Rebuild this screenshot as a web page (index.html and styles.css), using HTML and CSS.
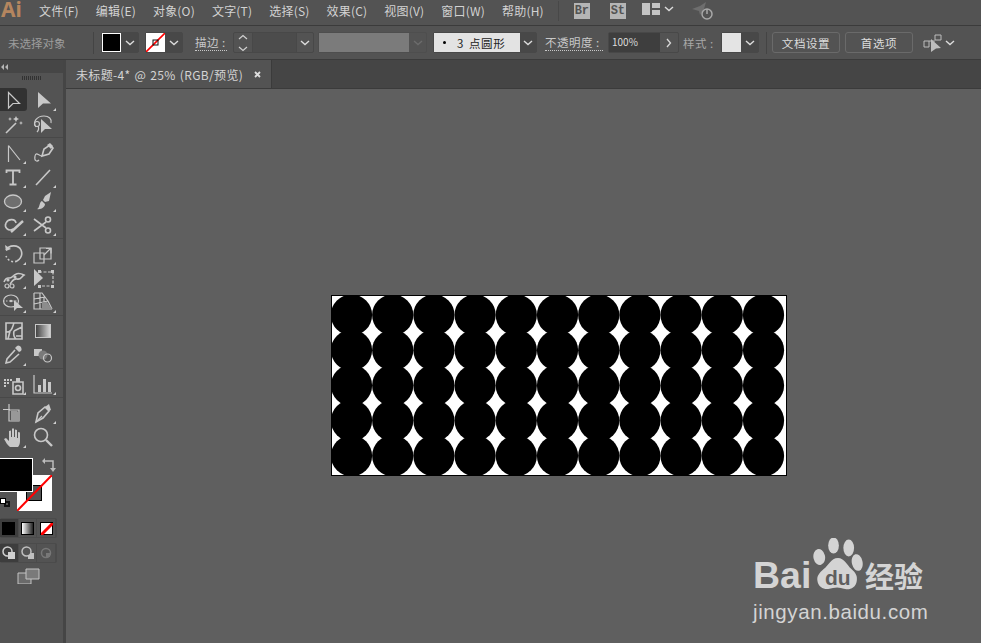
FILE: index.html
```html
<!DOCTYPE html>
<html lang="en">
<head>
    <meta charset="UTF-8">
    <title>Ai</title>
    <link rel="stylesheet" href="styles.css">
</head>
<body>
    <div class="menubar">
        <span class="logo">Ai</span>
        <ul class="menu">
            <li>文件(F)</li>
            <li>编辑(E)</li>
            <li>对象(O)</li>
            <li>文字(T)</li>
            <li>选择(S)</li>
            <li>效果(C)</li>
            <li>视图(V)</li>
            <li>窗口(W)</li>
            <li>帮助(H)</li>
        </ul>
        <div class="menu-sep"></div>
        <span class="bridge">Br</span>
        <span class="bridge stock">St</span>
        <svg class="layout-ic" width="18" height="14" viewBox="0 0 18 14"><path d="M0 1h8v12H0zM10 1h8v5h-8zM10 8h8v5h-8z" fill="#c4c4c4"/></svg>
        <svg class="chev menu-chev" width="10" height="6" viewBox="0 0 10 6"><path d="M1 1l4 3.5L9 1"/></svg>
        <svg class="rocket" width="24" height="20" viewBox="0 0 24 20"><path d="M1 8L9 5 15 1 13 8 9 14 8 10z" fill="#6e6e6e"/><circle cx="16" cy="13" r="5" fill="none" stroke="#a8a8a8" stroke-width="1.5"/><path d="M16 8v5" stroke="#a8a8a8" stroke-width="1.5"/></svg>
    </div>

    <div class="optbar">
        <span class="no-sel">未选择对象</span>
        <div class="opt-sep"></div>
        <div class="combo fill-combo">
            <span class="swatch black"></span>
            <span class="drop"><svg class="chev" width="10" height="6" viewBox="0 0 10 6"><path d="M1 1l4 3.5L9 1"/></svg></span>
        </div>
        <div class="combo stroke-combo">
            <span class="swatch">
                <svg width="19" height="19" viewBox="0 0 19 19"><path d="M0 19L19 0" stroke="#f00" stroke-width="1.6"/><rect x="7" y="7" width="5" height="5" fill="none" stroke="#111"/></svg>
            </span>
            <span class="drop"><svg class="chev" width="10" height="6" viewBox="0 0 10 6"><path d="M1 1l4 3.5L9 1"/></svg></span>
        </div>
        <span class="lbl stroke-lbl">描边 :</span>
        <div class="combo weight">
            <span class="spin">
                <svg width="10" height="18" viewBox="0 0 10 18"><path d="M1 5l4-3.5L9 5M1 13l4 3.5L9 13" fill="none" stroke="#d0d0d0" stroke-width="1.2"/></svg>
            </span>
            <span class="field"></span>
            <span class="drop"><svg class="chev" width="10" height="6" viewBox="0 0 10 6"><path d="M1 1l4 3.5L9 1"/></svg></span>
        </div>
        <div class="combo profile">
            <span class="gray-field"></span>
            <span class="drop"><svg class="chev off" width="10" height="6" viewBox="0 0 10 6"><path d="M1 1l4 3.5L9 1"/></svg></span>
        </div>
        <div class="combo brush">
            <span class="brush-val"><i class="dot"></i><b>3</b>点圆形</span>
            <span class="drop"><svg class="chev" width="10" height="6" viewBox="0 0 10 6"><path d="M1 1l4 3.5L9 1"/></svg></span>
        </div>
        <span class="lbl opacity-lbl">不透明度 :</span>
        <div class="combo opacity">
            <span class="op-val">100%</span>
            <span class="drop"><svg width="6" height="10" viewBox="0 0 6 10"><path d="M1 1l3.5 4L1 9" fill="none" stroke="#d8d8d8" stroke-width="1.3"/></svg></span>
        </div>
        <span class="lbl style-lbl">样式 :</span>
        <div class="combo style">
            <span class="swatch light"></span>
            <span class="drop"><svg class="chev" width="10" height="6" viewBox="0 0 10 6"><path d="M1 1l4 3.5L9 1"/></svg></span>
        </div>
        <div class="opt-sep sep2"></div>
        <button class="btn">文档设置</button>
        <button class="btn">首选项</button>
        <svg class="arrange" width="20" height="18" viewBox="0 0 20 18"><path d="M1 7h5v6H1zM12 1h6v5h-6zM6 7h6" fill="none" stroke="#bdbdbd"/><path d="M8 5l10 9-5 .5L8 18z" fill="#bdbdbd"/></svg>
        <svg class="chev" width="10" height="6" viewBox="0 0 10 6"><path d="M1 1l4 3.5L9 1"/></svg>
    </div>

    <div class="workspace">
        <aside class="tools">
            <div class="tools-head">
                <svg width="7" height="6" viewBox="0 0 7 6"><path d="M3 0v6L0 3zM7 0v6L4 3z" fill="#b5b5b5"/></svg>
            </div>
            <div class="grip"></div>

            <div class="tool-group">
                <div class="tool active"><svg viewBox="0 0 24 24"><path class="ln" d="M6.5 4.5V20l4.5-4.5h6.500z"/></svg></div>
                <div class="tool more"><svg viewBox="0 0 24 24"><path class="fl" d="M7 4v16l5-4.500h8z"/></svg></div>
                <div class="tool"><svg viewBox="0 0 24 24"><path class="ln th" d="M4 21L14 11"/><path class="fl" d="M14 4l1 2 2 1-2 1-1 2-1-2-2-1 2-1zM8 5l.6 1.400L10 7l-1.400.6L8 9l-.6-1.400L6 7l1.400-.6zM19 9l.6 1.400 1.400.6-1.400.6L19 13l-.6-1.400-1.400-.6 1.400-.6z"/></svg></div>
                <div class="tool"><svg viewBox="0 0 24 24"><path class="ln" d="M5 15C1 10 6 4 13 4c5 0 8 3 7 7"/><circle class="ln" cx="6" cy="12" r="2.500"/><path class="ln" d="M7 14c1 2 1 4-1 6"/><path class="fl" d="M10 7v14l4-4h7z"/></svg></div>
            </div>

            <div class="tool-group">
                <div class="tool more"><svg viewBox="0 0 24 24"><path class="ln" d="M6.500 4.500V21M6.500 4.500L18 19"/></svg></div>
                <div class="tool"><svg viewBox="0 0 24 24"><path class="ln th" d="M11 15l2-7 6-4 3 3-4 6-7 2z"/><path class="ln" d="M11 15C8 15 5 10 4 15s2 6 4 4"/><path class="fl" d="M16 4l3-2 3 3-2 3z"/></svg></div>
                <div class="tool more"><svg viewBox="0 0 24 24"><path class="ln t-bar" d="M4.500 8V5.500h13V8M11 5.500V19M7.500 19.500h7"/></svg></div>
                <div class="tool more"><svg viewBox="0 0 24 24"><path class="ln th" d="M5 20L19 5"/></svg></div>
                <div class="tool more"><svg viewBox="0 0 24 24"><ellipse cx="11" cy="12.500" rx="8.500" ry="6.500" fill="#6f6f6f" stroke="#c8c8c8" stroke-width="1.300"/></svg></div>
                <div class="tool more"><svg viewBox="0 0 24 24"><path class="fl" d="M20 3l-2 9-4 1-2-2 2-4zM11 12l3 3c0 3-4 6-8 5 3-1 2-7 5-8z"/></svg></div>
                <div class="tool more"><svg viewBox="0 0 24 24"><path class="ln th" d="M11 16c-5 3-9-2-7-6s9-5 10 0"/><path class="ln thick" d="M9 19L21 8"/></svg></div>
                <div class="tool more"><svg viewBox="0 0 24 24"><circle class="ln th" cx="17" cy="6.500" r="2.500"/><circle class="ln th" cx="17" cy="17.500" r="2.500"/><path class="ln th" d="M3 6l12 9M3 18L15 9"/></svg></div>
            </div>

            <div class="tool-group">
                <div class="tool more"><svg viewBox="0 0 24 24"><path class="ln th" d="M4 8c3-5 12-6 15 0 2 5-1 9-4 11"/><path class="ln th" stroke-dasharray="2 2" d="M15 19c-4 2-9 0-11-5"/><path class="fl" d="M3 3l1 6 5-2z"/></svg></div>
                <div class="tool more"><svg viewBox="0 0 24 24"><path class="ln" d="M3 11h10v10H3zM9 6h11v11H9z"/><path class="ln" d="M13 13l6-6M15 6.500h5v5"/></svg></div>
                <div class="tool more"><svg viewBox="0 0 24 24"><path class="ln th" d="M2 16c3-7 5-2 8-5s6-5 12-2c-3 2-3 5-7 4s-5 3-7 5"/><circle class="fl" cx="6" cy="14" r="1.600"/><circle class="fl" cx="13" cy="11" r="1.600"/><circle class="ln" cx="5" cy="20" r="2"/><circle class="ln" cx="10" cy="20" r="2"/></svg></div>
                <div class="tool"><svg viewBox="0 0 24 24"><path class="fl" d="M3 3l9 9-9 8z"/><path class="ln" stroke-dasharray="3 1.500" d="M8 6h14v14H8"/><path class="fl" d="M7 4h3v3H7zM20 4h3v3h-3zM20 19h3v3h-3zM7 19h3v3H7z"/></svg></div>
                <div class="tool more"><svg viewBox="0 0 24 24"><ellipse class="ln" cx="9" cy="11" rx="7.500" ry="6"/><path class="ln" stroke-dasharray="1.500 1.500" d="M1 11h14"/><circle class="fl" cx="9" cy="11" r="1.200"/><path class="fl" d="M12 10v11l3-3h6z"/></svg></div>
                <div class="tool more"><svg viewBox="0 0 24 24"><path class="ln" d="M3 3v16h18M3 3l8 0 3 4 3 4 4 8M3 9l11-2M3 14l14-3M9 3v16M13 7v12"/><path d="M11 12l5 0 5 7H11z" fill="#8c8c8c"/></svg></div>
            </div>

            <div class="tool-group">
                <div class="tool"><svg viewBox="0 0 24 24"><path class="ln th" d="M4 4h16v16H4zM4 13c6 0 6-4 8-9M12 12l8-4M12 12c-1 4 0 6 2 8M8 12l-2 8M14 17l6 0"/></svg></div>
                <div class="tool"><svg viewBox="0 0 24 24"><defs><linearGradient id="grad"><stop offset="0" stop-color="#3e3e3e"/><stop offset="1" stop-color="#d8d8d8"/></linearGradient></defs><rect x="4.500" y="5.500" width="15" height="13" fill="url(#grad)" stroke="#c8c8c8"/></svg></div>
                <div class="tool more"><svg viewBox="0 0 24 24"><path class="fl" d="M15 3c2-2 6 2 4 5l-2 1-4-4z"/><path class="ln th" d="M13 7L5 16l-1 4 4-1 9-8"/></svg></div>
                <div class="tool"><svg viewBox="0 0 24 24"><path d="M3 6h8v7H3z" fill="#c8c8c8"/><circle cx="12" cy="12" r="4.500" fill="#7a7a7a"/><circle class="ln" cx="16.500" cy="15" r="4"/></svg></div>
            </div>

            <div class="tool-group">
                <div class="tool more"><svg viewBox="0 0 24 24"><path class="fl" d="M2 7h2v2H2zM5 7h2v2H5zM8 7h2v2H8zM2 10h2v2H2zM5 10h2v2H5zM2 13h2v2H2z"/><path class="ln th" d="M11 10h10v12H11z"/><path class="fl" d="M14 6h4v4h-4z"/><circle class="ln th" cx="16" cy="16" r="2.500"/></svg></div>
                <div class="tool more"><svg viewBox="0 0 24 24"><path class="ln" d="M3 3v18h18"/><path class="fl" d="M7 13h3v7H7zM12 7h3v13h-3zM17 10h3v10h-3z"/></svg></div>
            </div>

            <div class="tool-group last">
                <div class="tool"><svg viewBox="0 0 24 24"><path class="ln" d="M1 8.500h7M7 3v5M7 9h10v11H7z" /><path d="M9 10h6l3 3v7H9z" fill="#989898"/></svg></div>
                <div class="tool more"><svg viewBox="0 0 24 24"><path class="ln th" d="M5 21l2-9 7-6 4 4-6 7z"/><path class="fl" d="M14 6l4-3 2 6-2 1z"/><path class="ln" d="M5 21l6-6"/></svg></div>
                <div class="tool more"><svg viewBox="0 0 24 24"><path class="fl" d="M8 22c-3-2-4-5-6-8l2-1 3 3V6l2-.5V12h1V3.500l2 0V12h1V4.500l2 .5v8h1V7l2 .5V16c0 3-1 5-2 6z"/></svg></div>
                <div class="tool"><svg viewBox="0 0 24 24"><circle class="ln th" cx="10" cy="10" r="6.500"/><path class="ln thick" d="M15 15l6 6"/></svg></div>
            </div>

            <div class="swatches">
                <div class="big-fill"></div>
                <div class="big-stroke">
                    <div class="hole"></div>
                    <svg width="35" height="36" viewBox="0 0 35 36"><path d="M0 36L35 0" stroke="#f00" stroke-width="2"/></svg>
                </div>
                <svg class="swap" width="14" height="14" viewBox="0 0 14 14"><path d="M2 3h9v8" fill="none" stroke="#bdbdbd" stroke-width="1.500"/><path d="M3 0v6L0 3zM8 10h6l-3 4z" fill="#bdbdbd"/></svg>
                <div class="mini-stroke"></div>
                <div class="mini-fill"></div>
            </div>

            <div class="mode-row">
                <span class="mode on"><i class="m-solid"></i></span>
                <span class="mode"><i class="m-grad"></i></span>
                <span class="mode"><i class="m-none"><svg width="12" height="12" viewBox="0 0 12 12"><path d="M0 12L12 0" stroke="#f00" stroke-width="3"/></svg></i></span>
            </div>
            <div class="mode-row draw">
                <span class="mode on"><svg width="14" height="14" viewBox="0 0 14 14"><circle cx="5.500" cy="5.500" r="4.500" fill="none" stroke="#d0d0d0" stroke-width="1.500"/><path d="M6 6h7v7H6z" fill="#d0d0d0"/></svg></span>
                <span class="mode"><svg width="14" height="14" viewBox="0 0 14 14"><circle cx="5.500" cy="5.500" r="4.500" fill="none" stroke="#c0c0c0" stroke-width="1.500"/><path d="M7 9h6v4H7zM9 7h4v2H9z" fill="#c0c0c0"/></svg></span>
                <span class="mode"><svg width="14" height="14" viewBox="0 0 14 14"><circle cx="7" cy="7" r="4.500" fill="none" stroke="#777" stroke-width="1.500"/><path d="M7 7h4v4H7z" fill="#777"/></svg></span>
            </div>
            <div class="screen-mode">
                <svg width="24" height="16" viewBox="0 0 24 16"><path d="M1 5h13v11H1z" fill="#6a6a6a" stroke="#c4c4c4"/><path d="M9 1h13v10H9z" fill="#7a7a7a" stroke="#c4c4c4"/></svg>
            </div>
        </aside>

        <div class="docarea">
            <div class="tabs">
                <div class="tab">
                    <span>未标题-4* @ 25% (RGB/预览)</span>
                    <svg width="7" height="7" viewBox="0 0 7 7"><path d="M1 1l5 5M6 1L1 6" stroke="#dedede" stroke-width="1.800"/></svg>
                </div>
            </div>
            <div class="canvas">
                <svg class="artboard" width="456" height="181" viewBox="0 0 456 181">
                    <defs>
                        <g id="row">
                            <circle cx="20.5" cy="0" r="20.6"/>
                            <circle cx="61.7" cy="0" r="20.6"/>
                            <circle cx="102.9" cy="0" r="20.6"/>
                            <circle cx="144.1" cy="0" r="20.6"/>
                            <circle cx="185.3" cy="0" r="20.6"/>
                            <circle cx="226.5" cy="0" r="20.6"/>
                            <circle cx="267.7" cy="0" r="20.6"/>
                            <circle cx="308.9" cy="0" r="20.6"/>
                            <circle cx="350.1" cy="0" r="20.6"/>
                            <circle cx="391.3" cy="0" r="20.6"/>
                            <circle cx="432.5" cy="0" r="20.6"/>
                        </g>
                    </defs>
                    <rect width="456" height="181" fill="#fff"/>
                    <use href="#row" y="20"/>
                    <use href="#row" y="55.2"/>
                    <use href="#row" y="90.4"/>
                    <use href="#row" y="125.6"/>
                    <use href="#row" y="160.8"/>
                    <rect x=".5" y=".5" width="455" height="180" fill="none" stroke="#000"/>
                </svg>
                <div class="watermark">
                    <div class="wm-top">
                        <span class="wm-bai">Bai</span>
                        <svg class="paw" width="50" height="56" viewBox="0 0 56 56" preserveAspectRatio="none">
                            <ellipse cx="23" cy="7.500" rx="6" ry="8"/>
                            <ellipse cx="40" cy="10" rx="6" ry="8.500"/>
                            <ellipse cx="7" cy="19" rx="6.500" ry="8" transform="rotate(-15 7 19)"/>
                            <ellipse cx="49.500" cy="24.500" rx="6" ry="8.500" transform="rotate(-15 49.500 24.500)"/>
                            <path d="M28 20c7 0 10 7 15 11 5 4 7 7 6 12-1 7-8 9-13 8-4-.7-6-1.500-9-1.500s-6 1-10 1.500c-5 .6-11-2-12-8-1-5 2-8 7-12 5-3 8-11 16-11z"/>
                        </svg>
                        <span class="wm-du">du</span>
                        <span class="wm-jy">经验</span>
                    </div>
                    <div class="wm-url">jingyan.baidu.com</div>
                </div>
            </div>
        </div>
    </div>
</body>
</html>
```

FILE: styles.css
```css
*{
    margin: 0;
    padding: 0;
    box-sizing: border-box;
}
body{
    width: 981px;
    height: 643px;
    overflow: hidden;
    background-color: #535353;
    color: #d2d2d2;
    font-family: "Noto Sans CJK SC", "Liberation Sans", sans-serif;
    font-size: 12px;
    display: flex;
    flex-direction: column;
}

/* menu */
.menubar{
    height: 26px;
    display: flex;
    align-items: center;
    border-bottom: 1px solid #3b3b3b;
}
.logo{
    width: 39px;
    padding-left: 1px;
    align-self: flex-start;
    font-family: "Noto Sans", sans-serif;
    font-size: 21px;
    font-weight: 700;
    color: #b5865f;
    line-height: 18px;
}
.menu{
    list-style-type: none;
    display: flex;
    gap: 17px;
}
.menu li{
    white-space: nowrap;
    margin-top: -5px;
    letter-spacing: .2px;
}
.menu-sep{
    width: 1px;
    height: 20px;
    margin-left: 14px;
    margin-top: -4px;
    background-color: #484848;
}
.bridge{
    width: 16px;
    height: 16px;
    margin-left: 15px;
    margin-top: -4px;
    background-color: #b5b5b5;
    color: #535353;
    font-family: "Liberation Mono", monospace;
    font-size: 12px;
    font-weight: 700;
    line-height: 16px;
    text-align: center;
}
.stock{
    margin-left: 20px;
}
.layout-ic{
    margin-left: 16px;
    margin-top: -7px;
}
.menu-chev{
    margin-left: 4px;
    margin-top: -8px;
}
.rocket{
    margin-left: 17px;
    margin-top: -3px;
}
.chev{
    flex: none;
    fill: none;
    stroke: #dcdcdc;
    stroke-width: 1.4;
}
.chev.off{
    stroke: #6c6c6c;
}

/* options */
.optbar{
    height: 34px;
    display: flex;
    align-items: center;
    border-bottom: 1px solid #3b3b3b;
}
.no-sel{
    width: 93px;
    padding-left: 8px;
    color: #9c9c9c;
    font-size: 11.500px;
    white-space: nowrap;
}
.opt-sep{
    width: 1px;
    height: 22px;
    background-color: #444;
}
.sep2{
    margin-left: 7px;
}
.combo{
    display: flex;
    height: 21px;
    border: 1px solid #484848;
    border-radius: 2px;
    align-items: stretch;
}
.fill-combo{
    margin-left: 7px;
    width: 38px;
}
.stroke-combo{
    margin-left: 6px;
    width: 38px;
}
.swatch{
    width: 19px;
    background-color: #fff;
    flex: none;
}
.swatch svg{
    display: block;
}
.black{
    background-color: #000;
    border: 1px solid #fff;
}
.light{
    background-color: #e4e4e4;
}
.drop{
    flex: 1;
    display: flex;
    align-items: center;
    justify-content: center;
    background-color: #484848;
}
.lbl{
    color: #c8c8c8;
    font-size: 11.5px;
    letter-spacing: .5px;
    white-space: nowrap;
    border-bottom: 1px dotted #c8c8c8;
    line-height: 16px;
}
.stroke-lbl{
    margin-left: 12px;
    width: 32px;
}
.weight{
    margin-left: 6px;
    width: 81px;
}
.spin{
    width: 19px;
    display: flex;
    align-items: center;
    justify-content: center;
    border-right: 1px solid #484848;
}
.field{
    flex: 1;
    background-color: #4c4c4c;
}
.weight .drop{
    flex: none;
    width: 17px;
    background: none;
    border-left: 1px solid #484848;
}
.profile{
    margin-left: 4px;
    width: 109px;
    border-color: #4e4e4e;
}
.gray-field{
    width: 90px;
    background-color: #7b7b7b;
}
.profile .drop{
    background: none;
}
.brush{
    margin-left: 6px;
    width: 104px;
}
.brush-val{
    width: 86px;
    display: flex;
    align-items: center;
    padding-left: 9px;
    background-color: #e3e3e3;
    color: #222;
    font-size: 11.5px;
    letter-spacing: .6px;
}
.brush-val b{
    font-weight: 400;
    margin: 0 5px 0 11px;
}
.dot{
    width: 3px;
    height: 3px;
    border-radius: 50%;
    background-color: #000;
}
.opacity-lbl{
    margin-left: 8px;
    width: 58px;
}
.opacity{
    margin-left: 5px;
    width: 71px;
}
.op-val{
    width: 51px;
    padding-left: 3px;
    background-color: #3e3e3e;
    color: #dcdcdc;
    font-size: 10px;
    line-height: 17px;
}
.opacity .drop{
    background: none;
}
.style-lbl{
    margin-left: 4px;
    width: 34px;
    border: none;
    color: #a8a8a8;
}
.style{
    margin-left: 4px;
    width: 38px;
}
.btn{
    width: 68px;
    height: 21px;
    margin-left: 5px;
    border: 1px solid #6a6a6a;
    border-radius: 3px;
    background: none;
    color: #dcdcdc;
    font-family: inherit;
    font-size: 11.5px;
    letter-spacing: .6px;
}
.btn + .btn{
    margin-left: 5px;
}
.arrange{
    margin-left: 10px;
    margin-right: 2px;
}

/* tools */
.workspace{
    flex: 1;
    display: flex;
    min-height: 0;
}
.tools{
    width: 66px;
    flex: none;
    background-color: #535353;
    border-right: 3px solid #454545;
}
.tools-head{
    height: 13px;
    background-color: #464646;
    display: flex;
    align-items: center;
    padding-left: 1px;
}
.grip{
    height: 12px;
    margin: 0 auto;
    width: 20px;
    background: repeating-linear-gradient(90deg, #323232 0 1px, transparent 1px 2px) 0 3px / 100% 4px no-repeat;
}
.tool-group{
    display: grid;
    grid-template-columns: 28px 30px;
    grid-auto-rows: 24px;
    padding: 3px 0 1px;
    border-bottom: 1px solid #484848;
}
.tool-group.last{
    border-bottom: none;
}
.tool{
    position: relative;
    display: flex;
    align-items: center;
    justify-content: center;
}
.tool svg{
    width: 24px;
    height: 24px;
}
.tool.active{
    background-color: #323232;
    border-radius: 0 3px 3px 0;
    height: 23px;
    width: 27px;
}
.tool.more::after{
    content: "";
    position: absolute;
    right: 2px;
    bottom: 1px;
    border-style: solid;
    border-width: 0 0 3px 3px;
    border-color: transparent transparent #d0d0d0 transparent;
}
.ln{
    fill: none;
    stroke: #c8c8c8;
    stroke-width: 1.2;
}
.th{
    stroke-width: 1.6;
}
.thick{
    stroke-width: 2.4;
}
.t-bar{
    stroke-width: 1.8;
}
.fl{
    fill: #c8c8c8;
}

/* colour */
.swatches{
    position: relative;
    height: 63px;
}
.big-fill{
    position: absolute;
    left: -1px;
    top: 8px;
    width: 34px;
    height: 34px;
    background-color: #000;
    border: 1px solid #fff;
    z-index: 2;
}
.big-stroke{
    position: absolute;
    left: 17px;
    top: 25px;
    width: 35px;
    height: 36px;
    background-color: #fff;
}
.big-stroke svg{
    position: absolute;
    left: 0;
    top: 0;
}
.hole{
    position: absolute;
    left: 9px;
    top: 10px;
    width: 16px;
    height: 16px;
    background-color: #535353;
    border: 1px solid #000;
}
.swap{
    position: absolute;
    left: 42px;
    top: 8px;
}
.mini-stroke{
    position: absolute;
    left: 4px;
    top: 51px;
    width: 6px;
    height: 6px;
    border: 2px solid #111;
}
.mini-fill{
    position: absolute;
    left: 0;
    top: 48px;
    width: 6px;
    height: 6px;
    background-color: #fff;
    border: 1px solid #000;
}
.mode-row{
    display: flex;
    height: 20px;
    width: 57px;
    margin-top: 5px;
    border: 1px solid #4b4b4b;
    border-left: none;
    border-radius: 2px;
}
.mode-row.draw{
    margin-top: 5px;
}
.mode{
    flex: 1;
    display: flex;
    align-items: center;
    justify-content: center;
    border-right: 1px solid #4b4b4b;
}
.mode.on{
    background-color: #3d3d3d;
}
.mode i{
    display: block;
    width: 13px;
    height: 13px;
    border: 1px solid #000;
}
.m-solid{
    background-color: #000;
}
.m-grad{
    background: linear-gradient(90deg, #fff, #222);
}
.m-none{
    background-color: #fff;
}
.m-none svg{
    display: block;
}
.screen-mode{
    margin-top: 5px;
    padding-left: 17px;
}
.screen-mode svg{
    display: block;
}

/* document */
.docarea{
    flex: 1;
    display: flex;
    flex-direction: column;
    min-width: 0;
}
.tabs{
    height: 29px;
    background-color: #454545;
    border-bottom: 1px solid #3b3b3b;
}
.tab{
    width: 206px;
    height: 28px;
    background-color: #535353;
    border-right: 1px solid #3b3b3b;
    display: flex;
    align-items: center;
    gap: 11px;
    padding-left: 10px;
    color: #d4d4d4;
    font-size: 12px;
    letter-spacing: .35px;
    word-spacing: 1px;
    white-space: nowrap;
}
.canvas{
    flex: 1;
    position: relative;
    background-color: #5f5f5f;
    padding: 206px 0 0 265px;
}
.artboard{
    display: block;
}

/* watermark */
.watermark{
    position: absolute;
    left: 687px;
    top: 449px;
    width: 180px;
    color: #d4d4d4;
}
.wm-top{
    position: relative;
    height: 62px;
}
.wm-bai{
    position: absolute;
    left: 0;
    top: 14px;
    font-family: "Liberation Sans", sans-serif;
    font-size: 37.5px;
    font-weight: 700;
    line-height: 46px;
}
.paw{
    position: absolute;
    left: 60px;
    top: 0;
    fill: #d4d4d4;
}
.wm-du{
    position: absolute;
    left: 72px;
    top: 27px;
    font-family: "Liberation Sans", sans-serif;
    font-size: 21px;
    font-weight: 700;
    line-height: 26px;
    color: #5f5f5f;
}
.wm-jy{
    position: absolute;
    left: 112px;
    top: 16px;
    font-size: 29px;
    font-weight: 700;
    line-height: 42px;
    white-space: nowrap;
}
.wm-url{
    font-family: "Liberation Sans", sans-serif;
    font-size: 20.5px;
    letter-spacing: .6px;
    line-height: 24px;
    white-space: nowrap;
}
```
